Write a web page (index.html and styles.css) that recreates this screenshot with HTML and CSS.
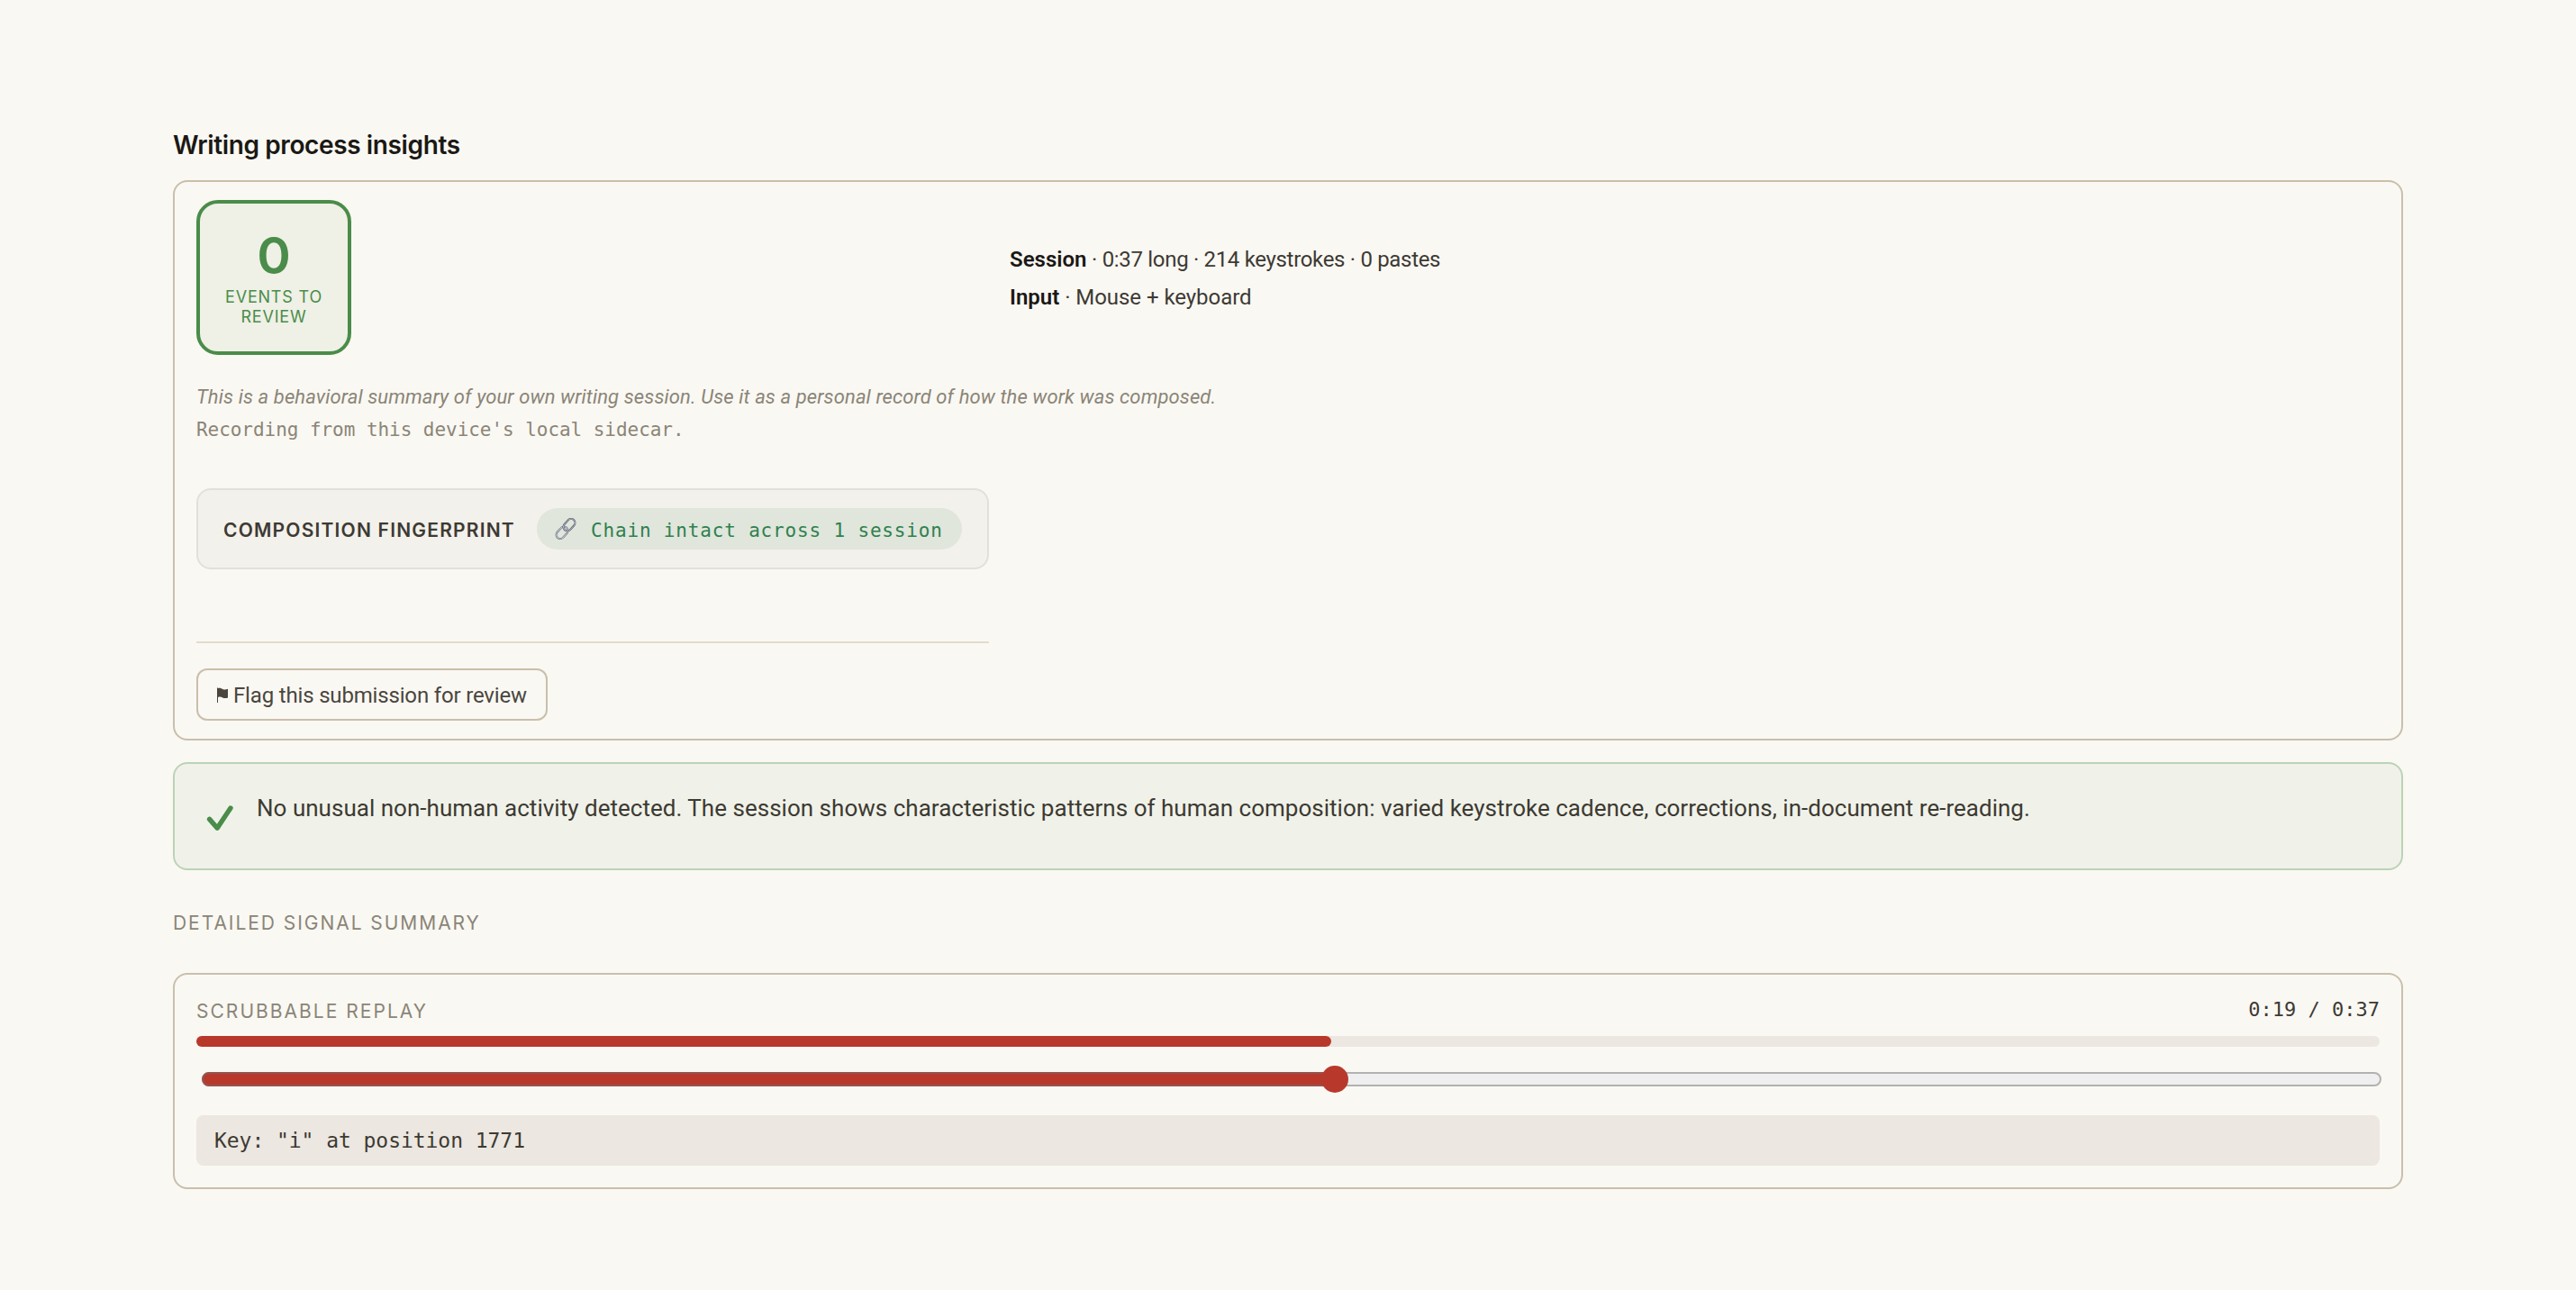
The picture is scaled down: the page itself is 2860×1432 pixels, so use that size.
FILE: index.html
```
<!DOCTYPE html>
<html lang="en">
<head>
  <meta charset="UTF-8">
  <title>Writing process insights</title>
  <link rel="stylesheet" href="styles.css">
</head>
<body>

  <h2 class="title">Writing process insights</h2>

  <section class="card summary">
    <div class="overview">
      <div class="badge">
        <span class="badge-count">0</span>
        <span class="badge-label">Events to review</span>
      </div>
      <div class="facts">
        <div class="fact session"><strong>Session</strong> · 0:37 long · 214 keystrokes · 0 pastes</div>
        <div class="fact"><strong>Input</strong> · Mouse + keyboard</div>
      </div>
    </div>

    <p class="note">This is a behavioral summary of your own writing session. Use it as a personal record of how the work was composed.</p>
    <p class="source">Recording from this device's local sidecar.</p>

    <div class="fingerprint">
      <span class="fingerprint-label">Composition fingerprint</span>
      <span class="chain">
        <svg class="chain-icon" viewBox="0 0 24 24" fill="none">
          <g transform="rotate(-48 12 12)">
            <rect x="-1.4" y="7.6" width="15" height="8.8" rx="4.4" stroke="#62616c" stroke-width="2"/>
            <rect x="-1.4" y="7.6" width="15" height="8.8" rx="4.4" stroke="#c3d4e2" stroke-width="1"/>
            <rect x="10.4" y="7.6" width="15" height="8.8" rx="4.4" stroke="#565060" stroke-width="2"/>
            <rect x="10.4" y="7.6" width="15" height="8.8" rx="4.4" stroke="#b4c4d6" stroke-width="0.9"/>
          </g>
        </svg>
        <span>Chain intact across 1 session</span>
      </span>
    </div>

    <div class="actions">
      <button class="flag-btn">
        <svg class="flag-icon" viewBox="0 0 12 17">
          <path d="M0 0.5H1V17H0Z M1 1C3.5 0.3 4.6 1.2 6.2 2C8 2.8 9.7 2.7 12 1.8V11.4C9.6 12.4 8 12.2 6.2 11.4C4.5 10.6 3.3 10.2 1 11Z" fill="#4a463d"/>
        </svg>
        <span>Flag this submission for review</span>
      </button>
    </div>
  </section>

  <section class="verdict">
    <svg class="check" viewBox="0 0 32 32" fill="none">
      <path d="M4.6 17.4L13.2 27.2L28 5" stroke="#4a8c4a" stroke-width="5.4" stroke-linecap="round" stroke-linejoin="round"/>
    </svg>
    <p>No unusual non-human activity detected. The session shows characteristic patterns of human composition: varied keystroke cadence, corrections, in-document re-reading.</p>
  </section>

  <h3 class="section-label">Detailed signal summary</h3>

  <section class="card replay">
    <div class="replay-head">
      <span class="replay-label">Scrubbable replay</span>
      <span class="replay-time">0:19 / 0:37</span>
    </div>
    <div class="progress"><div class="progress-fill" style="width: 52%"></div></div>
    <div class="slider">
      <div class="slider-track"><div class="slider-fill" style="width: 52%"></div></div>
      <div class="slider-thumb" style="left: 52%"></div>
    </div>
    <div class="event">Key: "i" at position 1771</div>
  </section>

</body>
</html>
```
FILE: styles.css
```
* {
  box-sizing: border-box;
}

body {
  margin: 0;
  padding: 143px 192px 0;
  background-color: #faf8f3;
  color: #3d3a33;
  font-family: Roboto, "Liberation Sans", sans-serif;
  font-size: 24px;
}

p {
  margin: 0;
}

.title {
  margin: 0 0 21px;
  font-family: Inter, sans-serif;
  font-size: 28px;
  line-height: 36px;
  font-weight: 600;
  letter-spacing: -0.38px;
  color: #1a1915;
}

.card {
  border: 2px solid #c9bfab;
  border-radius: 16px;
  padding: 20px 24px;
}

.overview {
  display: grid;
  grid-template-columns: 880px 1fr;
  gap: 23px;
  align-items: center;
}

.badge {
  display: flex;
  flex-direction: column;
  align-items: center;
  width: 172px;
  height: 172px;
  padding: 30px 20px 0;
  border: 4px solid #4a8c4a;
  border-radius: 24px;
  background-color: #eff0e6;
  color: #4a8c4a;
}

.badge-count {
  font-family: Inter, sans-serif;
  font-size: 57px;
  line-height: 56px;
  font-weight: 600;
}

.badge-label {
  margin-top: 7px;
  font-family: Inter, sans-serif;
  font-size: 18px;
  line-height: 22px;
  letter-spacing: 0.8px;
  text-align: center;
  text-transform: uppercase;
}

.facts {
  padding-top: 2px;
}

.fact {
  line-height: 42px;
  letter-spacing: -0.05px;
}

.fact.session {
  letter-spacing: -0.32px;
}

.fact strong {
  font-weight: 600;
  letter-spacing: 0;
  color: #1a1915;
}

.note {
  margin-top: 29px;
  font-size: 22px;
  line-height: 36px;
  font-style: italic;
  letter-spacing: 0.11px;
  color: #8a8577;
}

.source {
  font-family: "DejaVu Sans Mono", monospace;
  font-size: 21px;
  line-height: 36px;
  letter-spacing: -0.05px;
  color: #8a8577;
}

.fingerprint {
  display: flex;
  align-items: center;
  justify-content: space-between;
  width: 880px;
  height: 90px;
  margin-top: 47px;
  padding: 0 28px;
  border: 2px solid #e2e0d9;
  border-radius: 16px;
  background-color: #f3f1eb;
}

.fingerprint-label {
  padding-top: 3px;
  font-family: Inter, sans-serif;
  font-size: 21px;
  font-weight: 600;
  letter-spacing: 1.2px;
  text-transform: uppercase;
}

.chain {
  display: flex;
  align-items: center;
  width: 472px;
  height: 46px;
  padding-left: 20px;
  border-radius: 23px;
  background-color: #e0e6db;
  font-family: "DejaVu Sans Mono", monospace;
  font-size: 21px;
  letter-spacing: 0.83px;
  white-space: nowrap;
  color: #2f8050;
}

.chain span {
  padding-top: 3px;
}

.chain-icon {
  width: 24px;
  height: 24px;
  margin-right: 16px;
}

.actions {
  width: 880px;
  margin-top: 80px;
  padding-top: 28px;
  border-top: 2px solid #e2dccc;
}

.flag-btn {
  display: flex;
  align-items: center;
  width: 390px;
  height: 58px;
  padding: 1px 0 0 21px;
  border: 2px solid #c9bfab;
  border-radius: 12px;
  background: none;
  font-family: inherit;
  font-size: 24px;
  letter-spacing: -0.17px;
  white-space: nowrap;
  color: #4a463d;
}

.flag-icon {
  width: 12px;
  height: 17px;
  margin-right: 6px;
}

.verdict {
  display: flex;
  height: 120px;
  margin-top: 24px;
  padding: 28px 34px;
  border: 2px solid #bcd3b6;
  border-radius: 16px;
  background-color: #f0f2e9;
}

.verdict p {
  margin-left: 25px;
  font-size: 26px;
  line-height: 42px;
  letter-spacing: 0.02px;
}

.check {
  width: 32px;
  height: 32px;
  margin-top: 16px;
}

.section-label {
  margin: 44px 0 40px;
  font-family: Inter, sans-serif;
  font-size: 21px;
  line-height: 30px;
  font-weight: 400;
  letter-spacing: 1.95px;
  text-transform: uppercase;
  color: #8a8577;
}

.replay {
  padding-bottom: 24px;
}

.replay-head {
  display: flex;
  justify-content: space-between;
  height: 40px;
}

.replay-label {
  font-family: Inter, sans-serif;
  font-size: 21px;
  line-height: 42px;
  letter-spacing: 2.02px;
  text-transform: uppercase;
  color: #8a8577;
}

.replay-time {
  font-family: "DejaVu Sans Mono", monospace;
  font-size: 22px;
  line-height: 37px;
}

.progress {
  height: 12px;
  margin-top: 8px;
  border-radius: 6px;
  background-color: #ece7e0;
}

.progress-fill {
  height: 100%;
  border-radius: 6px;
  background-color: #b8392b;
}

.slider {
  position: relative;
  height: 30px;
  margin: 21px -2px 0 6px;
  padding: 7px 0;
}

.slider-track {
  height: 16px;
  border: 2px solid #b2b2b2;
  border-radius: 8px;
  background-color: #efefef;
}

.slider-fill {
  height: 16px;
  margin: -2px;
  border: 2px solid #955450;
  border-radius: 8px 0 0 8px;
  background-color: #b8392b;
}

.slider-thumb {
  position: absolute;
  top: 0;
  width: 30px;
  height: 30px;
  margin-left: -15px;
  border-radius: 50%;
  background-color: #b8392b;
}

.event {
  margin-top: 25px;
  padding-left: 20px;
  border-radius: 8px;
  background-color: #ece7e0;
  font-family: "DejaVu Sans Mono", monospace;
  font-size: 23px;
  line-height: 56px;
  letter-spacing: -0.05px;
}
```
